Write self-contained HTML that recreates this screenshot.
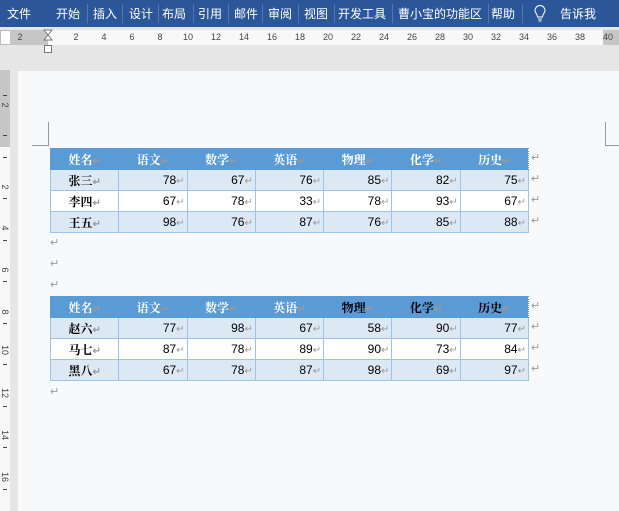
<!DOCTYPE html>
<html><head><meta charset="utf-8"><style>
*{margin:0;padding:0;box-sizing:border-box}
body{width:619px;height:511px;overflow:hidden;background:#e6e6e6;font-family:"Liberation Sans","Noto Sans CJK SC",sans-serif;position:relative}
.bar{position:absolute;left:0;top:0;width:619px;height:27px;background:#2b579a}
.m{position:absolute;top:5px;color:#fff;font-size:12px;transform:translateX(-50%);white-space:nowrap}
.sep{position:absolute;top:4px;width:1px;height:19px;background:#5577aa}
.ruler{position:absolute;left:10px;top:30px;width:609px;height:15px;background:#c6c6c6}
.rw{position:absolute;left:48px;top:30px;width:555px;height:15px;background:#f8f8f8}
.rn{position:absolute;top:32px;font-size:9px;color:#444;transform:translateX(-50%)}
.vr{position:absolute;left:0;top:70px;width:10px;height:441px;background:#f8f8f8}
.vrd{position:absolute;left:0;top:70px;width:10px;height:77px;background:#c6c6c6}
.tk{position:absolute;left:3px;width:4px;height:1px;background:#444}
.vn{position:absolute;left:0;font-size:9px;color:#444;transform:rotate(90deg);width:10px;text-align:center}
.page{position:absolute;left:18px;top:71px;width:601px;height:440px;background:#f8f9fb}
table{position:absolute;left:50px;border-collapse:collapse;table-layout:fixed;width:479px;font-size:12px}
td{height:21px;border:1px solid #9dc3e6;padding:0 2px;text-align:right;color:#000}
tr.h td{background:#5b9bd5;color:#fff;font-weight:bold;text-align:center;border-color:#5b9bd5;border-right:1px dotted #fff;font-family:"Noto Serif CJK SC",serif}
tr.a td{background:#dde8f5}
tr.b td{background:#fff}
td.n{text-align:center;font-weight:bold;font-family:"Noto Serif CJK SC",serif}
.p{color:#999;font-size:10px}
.pm{position:absolute;left:50px;color:#999;font-size:11px}
.rm{position:absolute;left:531px;color:#999;font-size:11px}
</style></head><body>
<div class="bar"></div>
<div class="m" style="left:19px">文件</div><div class="m" style="left:68px">开始</div><div class="m" style="left:105px">插入</div><div class="m" style="left:141px">设计</div><div class="m" style="left:174px">布局</div><div class="m" style="left:210px">引用</div><div class="m" style="left:246px">邮件</div><div class="m" style="left:280px">审阅</div><div class="m" style="left:316px">视图</div><div class="m" style="left:362px">开发工具</div><div class="m" style="left:440px">曹小宝的功能区</div><div class="m" style="left:503px">帮助</div><div class="m" style="left:578px">告诉我</div>
<svg style="position:absolute;left:534px;top:5px" width="12" height="17" viewBox="0 0 12 17"><path d="M3.5 12 C3.5 9 1 8 1 5.5 A5 5 0 0 1 11 5.5 C11 8 8.5 9 8.5 12 Z M4 14 H8 M4.5 16 H7.5" fill="none" stroke="#fff" stroke-width="1"/></svg>
<div class="sep" style="left:87px"></div><div class="sep" style="left:122px"></div><div class="sep" style="left:158px"></div><div class="sep" style="left:193px"></div><div class="sep" style="left:228px"></div><div class="sep" style="left:262px"></div><div class="sep" style="left:298px"></div><div class="sep" style="left:334px"></div><div class="sep" style="left:392px"></div><div class="sep" style="left:488px"></div><div class="sep" style="left:522px"></div>
<div style="position:absolute;left:0;top:30px;width:13px;height:15px;background:#fff;border:1px solid #bbb"></div>
<div class="ruler"></div><div class="rw"></div>
<div class="rn" style="left:20px">2</div><div class="rn" style="left:76px">2</div><div class="rn" style="left:104px">4</div><div class="rn" style="left:132px">6</div><div class="rn" style="left:160px">8</div><div class="rn" style="left:188px">10</div><div class="rn" style="left:216px">12</div><div class="rn" style="left:244px">14</div><div class="rn" style="left:272px">16</div><div class="rn" style="left:300px">18</div><div class="rn" style="left:328px">20</div><div class="rn" style="left:356px">22</div><div class="rn" style="left:384px">24</div><div class="rn" style="left:412px">26</div><div class="rn" style="left:440px">28</div><div class="rn" style="left:468px">30</div><div class="rn" style="left:496px">32</div><div class="rn" style="left:524px">34</div><div class="rn" style="left:552px">36</div><div class="rn" style="left:580px">38</div><div class="rn" style="left:608px">40</div>
<svg style="position:absolute;left:43px;top:29px" width="10" height="25" viewBox="0 0 10 25"><path d="M1 1 H9 L5 6 Z M5 6 L1 11 H9 Z" fill="#fff" stroke="#777"/><rect x="1.5" y="16.5" width="7" height="7" fill="#fff" stroke="#777"/></svg>
<div class="vr"></div><div class="vrd"></div>
<div class="tk" style="top:95px"></div><div class="tk" style="top:135px"></div><div class="tk" style="top:157px"></div><div class="tk" style="top:198px"></div><div class="tk" style="top:240px"></div><div class="tk" style="top:281px"></div><div class="tk" style="top:323px"></div><div class="tk" style="top:364px"></div><div class="tk" style="top:406px"></div><div class="tk" style="top:447px"></div><div class="tk" style="top:489px"></div>
<div class="vn" style="top:100px">2</div><div class="vn" style="top:182px">2</div><div class="vn" style="top:223px">4</div><div class="vn" style="top:265px">6</div><div class="vn" style="top:307px">8</div><div class="vn" style="top:345px">10</div><div class="vn" style="top:388px">12</div><div class="vn" style="top:430px">14</div><div class="vn" style="top:472px">16</div>
<div class="page"></div>
<div style="position:absolute;left:32px;top:122px;width:17px;height:24px;border-right:1px solid #999;border-bottom:1px solid #999"></div>
<div style="position:absolute;left:605px;top:122px;width:14px;height:24px;border-left:1px solid #999;border-bottom:1px solid #999"></div>
<table style="top:148px">
<tr class="h"><td>姓名<span class="p">↵</span></td><td>语文<span class="p">↵</span></td><td>数学<span class="p">↵</span></td><td>英语<span class="p">↵</span></td><td>物理<span class="p">↵</span></td><td>化学<span class="p">↵</span></td><td>历史<span class="p">↵</span></td></tr>
<tr class="a"><td class="n">张三<span class="p">↵</span></td><td>78<span class="p">↵</span></td><td>67<span class="p">↵</span></td><td>76<span class="p">↵</span></td><td>85<span class="p">↵</span></td><td>82<span class="p">↵</span></td><td>75<span class="p">↵</span></td></tr>
<tr class="b"><td class="n">李四<span class="p">↵</span></td><td>67<span class="p">↵</span></td><td>78<span class="p">↵</span></td><td>33<span class="p">↵</span></td><td>78<span class="p">↵</span></td><td>93<span class="p">↵</span></td><td>67<span class="p">↵</span></td></tr>
<tr class="a"><td class="n">王五<span class="p">↵</span></td><td>98<span class="p">↵</span></td><td>76<span class="p">↵</span></td><td>87<span class="p">↵</span></td><td>76<span class="p">↵</span></td><td>85<span class="p">↵</span></td><td>88<span class="p">↵</span></td></tr>
</table>
<table style="top:296px">
<tr class="h"><td>姓名<span class="p">↵</span></td><td>语文<span class="p">↵</span></td><td>数学<span class="p">↵</span></td><td>英语<span class="p">↵</span></td><td style="color:#000">物理<span class="p">↵</span></td><td style="color:#000">化学<span class="p">↵</span></td><td style="color:#000">历史<span class="p">↵</span></td></tr>
<tr class="a"><td class="n">赵六<span class="p">↵</span></td><td>77<span class="p">↵</span></td><td>98<span class="p">↵</span></td><td>67<span class="p">↵</span></td><td>58<span class="p">↵</span></td><td>90<span class="p">↵</span></td><td>77<span class="p">↵</span></td></tr>
<tr class="b"><td class="n">马七<span class="p">↵</span></td><td>87<span class="p">↵</span></td><td>78<span class="p">↵</span></td><td>89<span class="p">↵</span></td><td>90<span class="p">↵</span></td><td>73<span class="p">↵</span></td><td>84<span class="p">↵</span></td></tr>
<tr class="a"><td class="n">黑八<span class="p">↵</span></td><td>67<span class="p">↵</span></td><td>78<span class="p">↵</span></td><td>87<span class="p">↵</span></td><td>98<span class="p">↵</span></td><td>69<span class="p">↵</span></td><td>97<span class="p">↵</span></td></tr>
</table>
<div class="rm" style="top:151px">↵</div><div class="rm" style="top:172px">↵</div><div class="rm" style="top:193px">↵</div><div class="rm" style="top:214px">↵</div>
<div class="rm" style="top:299px">↵</div><div class="rm" style="top:320px">↵</div><div class="rm" style="top:341px">↵</div><div class="rm" style="top:362px">↵</div>
<div class="pm" style="top:236px">↵</div><div class="pm" style="top:257px">↵</div><div class="pm" style="top:278px">↵</div><div class="pm" style="top:385px">↵</div>
</body></html>
